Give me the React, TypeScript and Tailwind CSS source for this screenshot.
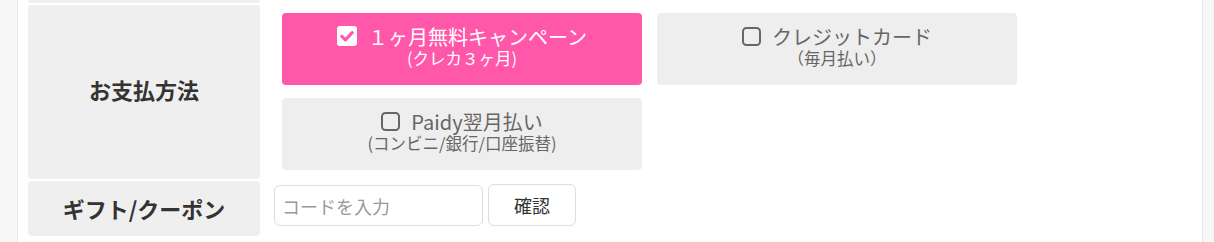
import React from "react";

const FONT = { fontFamily: '"Noto Sans CJK JP", "Noto Sans", sans-serif' };

function CheckIcon({ checked }: { checked: boolean }) {
  if (checked) {
    return (
      <svg width="20" height="20" viewBox="0 0 20 20" className="shrink-0">
        <rect x="0" y="0" width="20" height="20" rx="3" fill="#ffffff" />
        <path d="M4.8 10.3 L8.4 13.8 L15.2 6.6" fill="none" stroke="#ff57aa" strokeWidth="3.2" strokeLinecap="round" strokeLinejoin="round" />
      </svg>
    );
  }
  return (
    <svg width="19" height="19" viewBox="0 0 19 19" className="shrink-0">
      <rect x="1" y="1" width="17" height="17" rx="3.5" fill="none" stroke="#666666" strokeWidth="2" />
    </svg>
  );
}

interface PayOption {
  title: string;
  sub: string;
  checked: boolean;
}

const options: PayOption[] = [
  { title: "１ヶ月無料キャンペーン", sub: "(クレカ３ヶ月)", checked: true },
  { title: "クレジットカード", sub: "（毎月払い）", checked: false },
  { title: "Paidy翌月払い", sub: "(コンビニ/銀行/口座振替)", checked: false },
];

function PayButton({ opt }: { opt: PayOption }) {
  const on = opt.checked;
  return (
    <div
      className={
        "h-[72px] rounded-[4px] flex flex-col items-center justify-center pb-[6px] " +
        (on ? "bg-[#ff57aa] text-white" : "bg-[#eeeeee] text-[#666666]")
      }
    >
      <div className="flex items-center gap-[11px] text-[20px] leading-[23px]">
        <CheckIcon checked={on} />
        <span>{opt.title}</span>
      </div>
      <div className="text-[16.5px] leading-[20px]">{opt.sub}</div>
    </div>
  );
}

export default function App() {
  return (
    <div className="w-[1214px] h-[242px] flex bg-[#f7f7f7] overflow-hidden" style={FONT}>
      <div className="ml-[17px] w-[1186px] h-full border-x border-[#e9e9e9] bg-white pl-[10px] flex flex-col gap-[2px]">
        {/* top sliver of the row above */}
        <div className="flex h-[3px]">
          <div className="w-[232px] bg-[#efefef] rounded-b-[4px]" />
        </div>

        {/* payment method */}
        <div className="flex h-[174px]">
          <div className="w-[232px] shrink-0 bg-[#efefef] rounded-[4px] flex items-center justify-center pb-[5px]">
            <span className="text-[22px] font-bold text-[#333333]">お支払方法</span>
          </div>
          <div className="pl-[22px] pt-[8px]">
            <div className="grid grid-cols-[360px_360px] gap-x-[15px] gap-y-[13px]">
              {options.map((o) => (
                <PayButton key={o.title} opt={o} />
              ))}
            </div>
          </div>
        </div>

        {/* gift / coupon */}
        <div className="flex h-[55px]">
          <div className="w-[232px] shrink-0 bg-[#efefef] rounded-[4px] flex items-center justify-center pb-[1px]">
            <span className="text-[22px] font-bold text-[#333333]">ギフト/クーポン</span>
          </div>
          <div className="pl-[14px] pt-[3px] flex items-start gap-[5px]">
            <input
              placeholder="コードを入力"
              className="mt-[1px] w-[209px] h-[41px] border border-[#dddddd] rounded-[6px] px-[7px] text-[18px] text-[#333333] placeholder:text-[#999999] outline-none"
              style={FONT}
            />
            <button className="w-[88px] h-[42px] border border-[#dddddd] rounded-[6px] bg-white text-[18px] text-[#333333]" style={FONT}>
              確認
            </button>
          </div>
        </div>
      </div>
    </div>
  );
}
